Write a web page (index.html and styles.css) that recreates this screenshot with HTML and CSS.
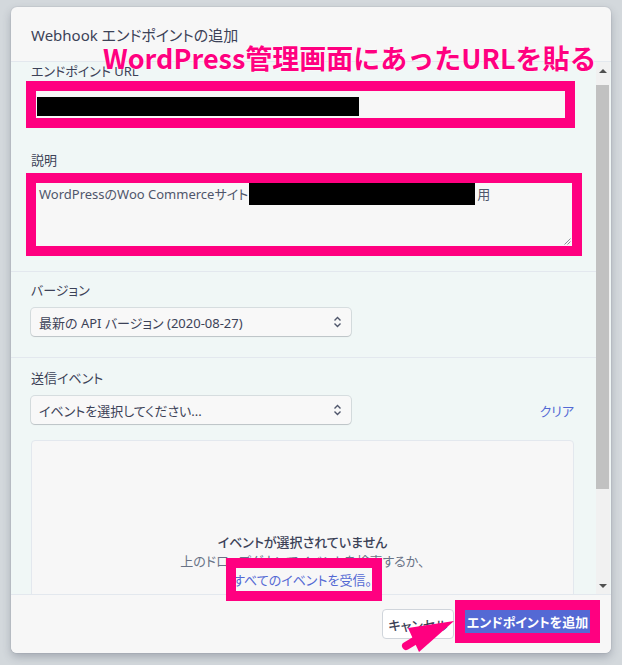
FILE: index.html
```html
<!DOCTYPE html>
<html lang="ja">
<head>
<meta charset="utf-8">
<title>Webhook エンドポイントの追加</title>
<link rel="stylesheet" href="styles.css">
</head>
<body>
<div class="backdrop">
  <div class="modal">
    <div class="header">Webhook エンドポイントの追加</div>
    <div class="main">
      <div class="content">
        <section class="sec sec-first">
          <div class="label">エンドポイント URL</div>
          <div class="input-url"><span class="redact redact-url"></span></div>
          <div class="label label-desc">説明</div>
          <div class="textarea">WordPressのWoo Commerceサイト<span class="redact redact-desc"></span>用
            <svg class="grip" width="7" height="7" viewBox="0 0 7 7"><path d="M6.5 0.5 L0.5 6.5 M6.5 3.5 L3.5 6.5" stroke="#8a8f98" stroke-width="1" fill="none"/></svg>
          </div>
        </section>
        <section class="sec sec-version">
          <div class="label">バージョン</div>
          <div class="select"><span>最新の API バージョン (2020-08-27)</span>
            <svg width="9" height="12" viewBox="0 0 9 12"><path d="M1.5 4.5 L4.5 1.5 L7.5 4.5 M1.5 7.5 L4.5 10.5 L7.5 7.5" stroke="#4f566b" stroke-width="1.4" fill="none"/></svg>
          </div>
        </section>
        <section class="sec sec-events">
          <div class="label">送信イベント</div>
          <div class="row">
            <div class="select"><span>イベントを選択してください...</span>
              <svg width="9" height="12" viewBox="0 0 9 12"><path d="M1.5 4.5 L4.5 1.5 L7.5 4.5 M1.5 7.5 L4.5 10.5 L7.5 7.5" stroke="#4f566b" stroke-width="1.4" fill="none"/></svg>
            </div>
            <a class="clear">クリア</a>
          </div>
          <div class="empty">
            <div class="empty-title">イベントが選択されていません</div>
            <div class="empty-sub">上のドロップダウンでイベントを検索するか、</div>
            <a class="empty-link">すべてのイベントを受信。</a>
          </div>
        </section>
      </div>
      <div class="scrollbar">
        <div class="sb-btn"><span class="tri-up"></span></div>
        <div class="sb-track"><div class="sb-thumb"></div></div>
        <div class="sb-btn"><span class="tri-down"></span></div>
      </div>
    </div>
    <div class="footer">
      <button class="btn-cancel">キャンセル</button>
      <button class="btn-primary">エンドポイントを追加</button>
    </div>
  </div>
</div>
<div class="annot-title">WordPress管理画面にあったURLを貼る</div>
<div class="annot-box"></div>
<svg class="annot-arrow" width="60" height="42" viewBox="400 615 60 42">
  <polygon points="454,621 408,628 419,652" fill="#ff0080"/>
  <line x1="406" y1="646" x2="416" y2="640" stroke="#ff0080" stroke-width="8" stroke-linecap="round"/>
</svg>
</body>
</html>
```

FILE: styles.css
```css
* { box-sizing: border-box; }
html, body { margin: 0; padding: 0; }
body {
  width: 622px;
  height: 665px;
  overflow: hidden;
  position: relative;
  background: #d3d8dc;
  font-family: "Noto Sans", "Noto Sans CJK JP", sans-serif;
  font-feature-settings: "palt";
  color: #3c4257;
}
.backdrop { padding: 7px 11px 0 11px; }
.modal {
  width: 600px;
  height: 646px;
  background: #f7f7f7;
  border-radius: 6px;
  box-shadow: 0 4px 8px rgba(60, 66, 87, 0.3), 0 0 0 1px rgba(60, 66, 87, 0.06);
  display: flex;
  flex-direction: column;
  overflow: hidden;
}
.header {
  height: 55px;
  flex: none;
  padding-left: 20px;
  display: flex;
  align-items: center;
  font-size: 15px;
  border-bottom: 1px solid #e3e8ee;
}
.main {
  height: 532px;
  flex: none;
  display: flex;
  background: #f0f7f6;
}
.content {
  width: 585px;
  overflow: hidden;
  background: #f0f7f6;
}
.sec {
  padding: 0 22px 0 20px;
  border-bottom: 1px solid #e3e8ee;
}
.label { font-size: 13px; line-height: 16px; color: #3c4257; }
.sec-first { padding-top: 1px; padding-bottom: 15px; }
.input-url {
  margin: 2px 0 0 -5px;
  width: 549px;
  height: 47px;
  border: 10px solid #ff0080;
  background: #f7f7f7;
  padding: 6px 0 0 1px;
}
.redact { background: #000; }
.redact-url { display: block; width: 322px; height: 19px; }
.label-desc { margin-top: 24px; }
.textarea {
  position: relative;
  margin: 5px 0 0 -5px;
  width: 556px;
  height: 83px;
  border: 10px solid #ff0080;
  background: #f7f7f7;
  padding: 0 0 0 3px;
  font-size: 13px;
  line-height: 22px;
  color: #4f566b;
}
.redact-desc {
  display: inline-block;
  vertical-align: top;
  width: 226px;
  height: 22px;
  margin: 0 2px 0 1px;
}
.grip { position: absolute; right: 1px; bottom: 1px; }
.sec-version { padding-top: 10px; padding-bottom: 21px; }
.select {
  margin-top: 10px;
  width: 320px;
  height: 28px;
  display: flex;
  align-items: center;
  justify-content: space-between;
  padding: 0 9px 0 8px;
  background: #f8f8f8;
  border-radius: 4px;
  box-shadow: 0 0 0 1px rgba(60, 66, 87, 0.14), 0 1px 1px rgba(0, 0, 0, 0.12);
  font-size: 13px;
  color: #3c4257;
}
.select svg { display: block; }
.sec-events { padding-top: 12px; border-bottom: none; }
.row { display: flex; justify-content: space-between; align-items: center; }
.clear { font-size: 13px; color: #5469d4; margin-top: 10px; }
.empty {
  margin-top: 16px;
  height: 300px;
  border: 1px solid #e3e8ee;
  border-radius: 4px;
  background: #f7f7f7;
  padding-top: 92px;
  text-align: center;
  font-size: 13px;
  line-height: 19px;
}
.empty-title { font-weight: 500; color: #3c4257; }
.empty-sub { color: #697386; }
.empty-link { color: #5469d4; display: block; }
.scrollbar {
  width: 14px;
  background: #f1f1f1;
  display: flex;
  flex-direction: column;
}
.sb-btn {
  height: 17px;
  flex: none;
  display: flex;
  align-items: center;
  justify-content: center;
}
.sb-track { flex: 1; }
.sb-thumb {
  margin: 6px 1px 0 0;
  height: 404px;
  background: #c1c1c1;
}
.tri-up {
  width: 0; height: 0;
  border-left: 4px solid transparent;
  border-right: 4px solid transparent;
  border-bottom: 4px solid #505050;
}
.tri-down {
  width: 0; height: 0;
  border-left: 4px solid transparent;
  border-right: 4px solid transparent;
  border-top: 4px solid #505050;
}
.footer {
  height: 59px;
  flex: none;
  border-top: 1px solid #e3e8ee;
  display: flex;
  justify-content: flex-end;
  align-items: flex-start;
  padding-right: 11px;
  gap: 1px;
  background: #f7f7f7;
}
.btn-cancel {
  margin-top: 14px;
  width: 72px;
  height: 30px;
  background: #fff;
  border: 1px solid #d0d5db;
  border-radius: 4px;
  font-family: inherit;
  font-feature-settings: "palt";
  font-size: 13px;
  font-weight: 500;
  color: #3c4257;
  padding: 0;
}
.btn-primary {
  margin-top: 5px;
  width: 145px;
  height: 43px;
  border: 10px solid #ff0080;
  background: #5469d4;
  color: #fff;
  font-family: inherit;
  font-feature-settings: "palt";
  font-size: 13px;
  font-weight: 700;
  padding: 0;
}
.annot-title {
  position: absolute;
  left: 103px;
  top: 41px;
  font-family: "Noto Sans CJK JP", sans-serif;
  font-feature-settings: normal;
  font-size: 27px;
  font-weight: 700;
  line-height: 34px;
  color: #ff0080;
  white-space: nowrap;
  text-shadow: 0 0 1px #fff, 0 0 1px #fff, 0 0 2px #fff;
}
.annot-box {
  position: absolute;
  left: 226px;
  top: 558px;
  width: 156px;
  height: 43px;
  border: 10px solid #ff0080;
}
.annot-arrow {
  position: absolute;
  left: 400px;
  top: 615px;
}
```
